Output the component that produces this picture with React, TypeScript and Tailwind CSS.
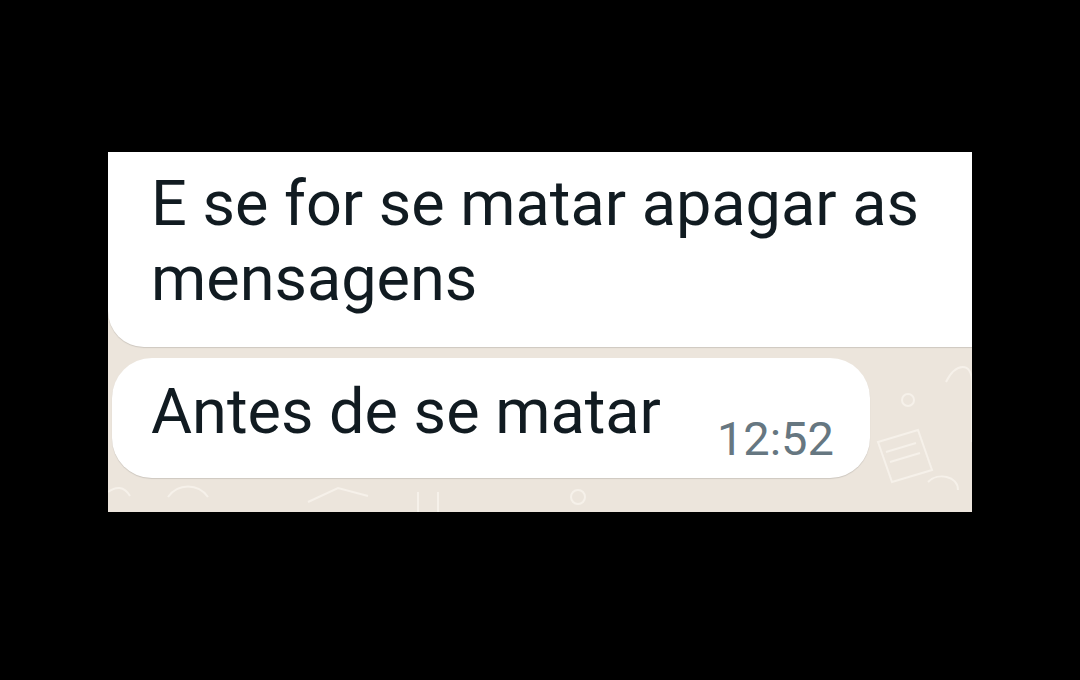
export default function App() {
  return (
    <div className="flex h-[680px] w-[1080px] items-start bg-black pt-[152px] pl-[108px]">
      <div
        className="relative flex h-[360px] w-[864px] flex-col overflow-hidden bg-[#ece5dc]"
        style={{ fontFamily: "Roboto, 'Noto Sans', sans-serif" }}
      >
        {/* faint wallpaper doodles */}
        <svg
          className="absolute inset-0 h-full w-full"
          viewBox="0 0 864 360"
          fill="none"
          stroke="#f6f1ea"
          strokeWidth="2"
        >
          <circle cx="800" cy="248" r="6" />
          <path d="M770 290 l40 -12 l14 40 l-40 12 z" />
          <path d="M778 300 l30 -9 M782 310 l30 -9" />
          <path d="M838 230 c10 -20 26 -20 26 0 v60" />
          <path d="M820 330 c10 -10 30 -6 30 8" />
          <path d="M60 345 c10 -14 30 -14 40 0" />
          <path d="M200 350 l30 -14 l30 8" />
          <path d="M310 340 v20 M330 340 v20" />
          <circle cx="470" cy="345" r="7" />
          <path d="M0 340 c8 -6 16 -6 22 4" />
        </svg>

        <div className="relative flex h-[195px] flex-col rounded-bl-[36px] bg-white pt-[14px] pl-[43px] shadow-[0_1px_1px_rgba(0,0,0,0.13)]">
          <p className="text-[63px] leading-[75px] text-[#111b21]">
            E se for se matar apagar as
            <br />
            mensagens
          </p>
        </div>

        <div className="relative mt-[11px] ml-[4px] flex h-[120px] w-[758px] items-start rounded-[40px] bg-white pl-[39px] shadow-[0_1px_1px_rgba(0,0,0,0.13)]">
          <span className="mt-[16px] text-[63px] leading-[75px] text-[#111b21]">
            Antes de se matar
          </span>
          <span className="mt-[53px] ml-[56px] text-[47px] leading-[56px] text-[#667781]">
            12:52
          </span>
        </div>
      </div>
    </div>
  );
}
